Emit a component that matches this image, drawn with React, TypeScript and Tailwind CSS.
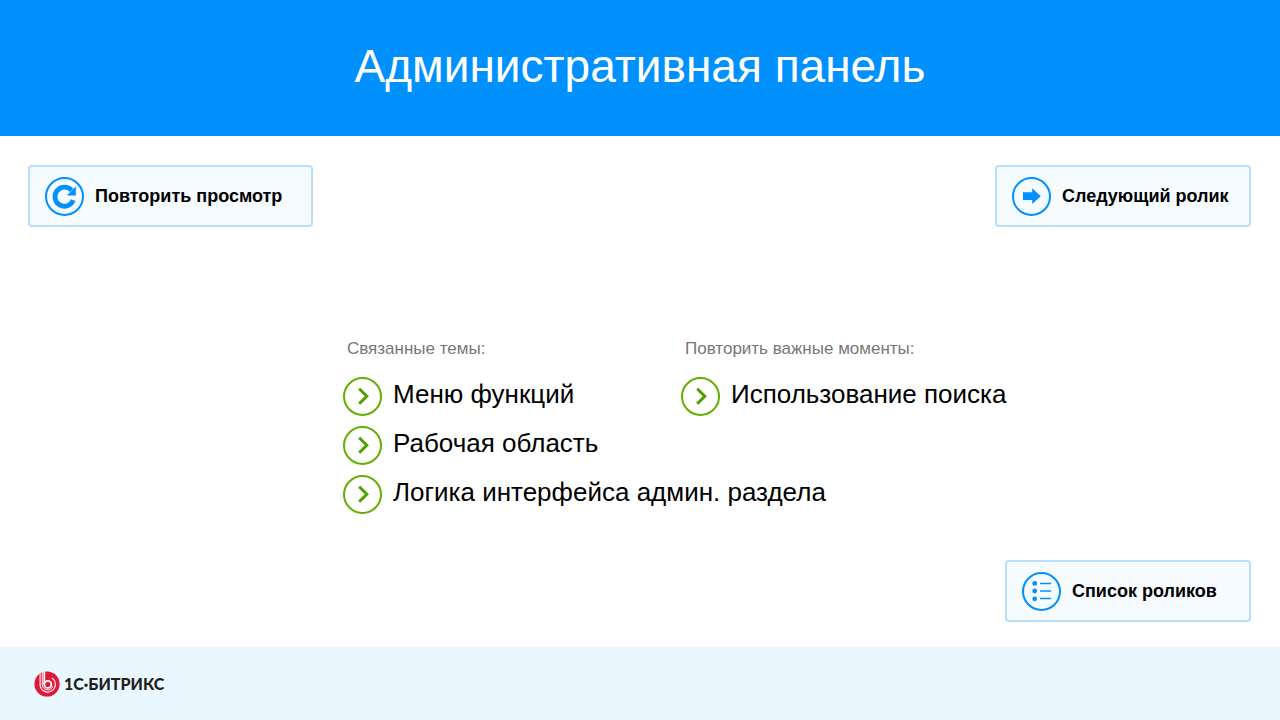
import type { ReactNode } from "react";

const RING = "size-[39px] shrink-0";

function ReplayIcon() {
  return (
    <svg viewBox="0 0 39 39" className={RING} fill="none" aria-hidden="true">
      <circle cx="19.5" cy="19.5" r="18.5" stroke="#0091ff" strokeWidth="2" />
      <path d="M28.3 23.2 A9.5 9.5 0 1 1 26.6 13.4" stroke="#0091ff" strokeWidth="4.8" />
      <path d="M30.8 9.6 V18.6 H21.8 Z" fill="#0091ff" />
    </svg>
  );
}

function NextIcon() {
  return (
    <svg viewBox="0 0 39 39" className={RING} fill="none" aria-hidden="true">
      <circle cx="19.5" cy="19.5" r="18.5" stroke="#0091ff" strokeWidth="2" />
      <path d="M11 15.2 H20.2 V11.2 L28.8 19.2 L20.2 27 V23 H11 Z" fill="#0091ff" />
    </svg>
  );
}

function ListIcon() {
  return (
    <svg viewBox="0 0 39 39" className={RING} fill="none" aria-hidden="true">
      <circle cx="19.5" cy="19.5" r="18.5" stroke="#0091ff" strokeWidth="2" />
      <g fill="#0091ff">
        <circle cx="12.7" cy="11.4" r="2.4" />
        <circle cx="12.7" cy="19" r="2.4" />
        <circle cx="12.7" cy="26.8" r="2.4" />
      </g>
      <path d="M18 11.5 H29 M18 19 H29 M18 26.5 H29" stroke="#0091ff" strokeWidth="1.4" />
    </svg>
  );
}

function ChevronIcon() {
  return (
    <svg viewBox="0 0 39 39" className={RING} fill="none" aria-hidden="true">
      <circle cx="19.5" cy="19.5" r="18.5" stroke="#62b000" strokeWidth="2" />
      <path d="M16.2 11.8 L23.8 19.3 L16.2 26.8" stroke="#50a000" strokeWidth="3" />
    </svg>
  );
}

function BitrixMark() {
  return (
    <svg viewBox="0 0 26 26" className="size-[26px] shrink-0" fill="none" aria-hidden="true">
      <circle cx="13" cy="13" r="12.6" fill="#e0193a" />
      <g stroke="#fff">
        <path d="M6.1 2.6 V13.4 A7.6 7.6 0 1 0 17.6 6.9" strokeWidth="1.1" />
        <path d="M8.3 1.4 V13.4 A5.4 5.4 0 0 0 18.8 15.2" strokeWidth="1" />
        <path d="M10.3 0.8 V13.4" strokeWidth="1.7" />
        <circle cx="13.8" cy="13.4" r="3.5" strokeWidth="1.8" />
      </g>
    </svg>
  );
}

function ActionButton({ icon, children }: { icon: ReactNode; children: ReactNode }) {
  return (
    <button
      type="button"
      className="flex h-[62px] items-center gap-[11px] rounded-[4px] border-2 border-[#b8dfff] bg-[#f6fbff] pl-[15px] text-lg font-bold whitespace-nowrap text-black"
    >
      {icon}
      {children}
    </button>
  );
}

function Topics({ title, items }: { title: string; items: string[] }) {
  return (
    <section>
      <h2 className="pl-1 text-[17px] leading-6 text-[#777]">{title}</h2>
      <ul className="mt-4 flex flex-col gap-2.5">
        {items.map((item) => (
          <li key={item}>
            <a href="#" className="flex items-start gap-[11px] text-[26px] leading-[34px] whitespace-nowrap text-black">
              <ChevronIcon />
              {item}
            </a>
          </li>
        ))}
      </ul>
    </section>
  );
}

export default function App() {
  return (
    <div className="flex min-h-screen flex-col bg-white font-['Liberation_Sans',Arial,sans-serif]">
      <header className="bg-[#0091ff] px-7 pt-[30px] pb-[34px] text-center text-white">
        <h1 className="text-[46px] leading-[72px]">Административная панель</h1>
      </header>

      <main className="flex grow flex-col justify-between pt-[29px] pr-[29px] pb-[25px] pl-7">
        <div className="flex justify-between">
          <div className="grid w-[285px]">
            <ActionButton icon={<ReplayIcon />}>Повторить просмотр</ActionButton>
          </div>
          <div className="grid w-[256px]">
            <ActionButton icon={<NextIcon />}>Следующий ролик</ActionButton>
          </div>
        </div>

        <div className="mx-auto mt-16 grid grid-cols-[338px_255px]">
          <Topics
            title="Связанные темы:"
            items={["Меню функций", "Рабочая область", "Логика интерфейса админ. раздела"]}
          />
          <Topics title="Повторить важные моменты:" items={["Использование поиска"]} />
        </div>

        <div className="ml-auto grid w-[246px]">
          <ActionButton icon={<ListIcon />}>Список роликов</ActionButton>
        </div>
      </main>

      <footer className="flex h-[73px] items-center gap-1 bg-[#eaf7ff] px-[34px]">
        <BitrixMark />
        <span className="font-['Lato',sans-serif] text-base font-black text-[#231f20]">1С·БИТРИКС</span>
      </footer>
    </div>
  );
}
